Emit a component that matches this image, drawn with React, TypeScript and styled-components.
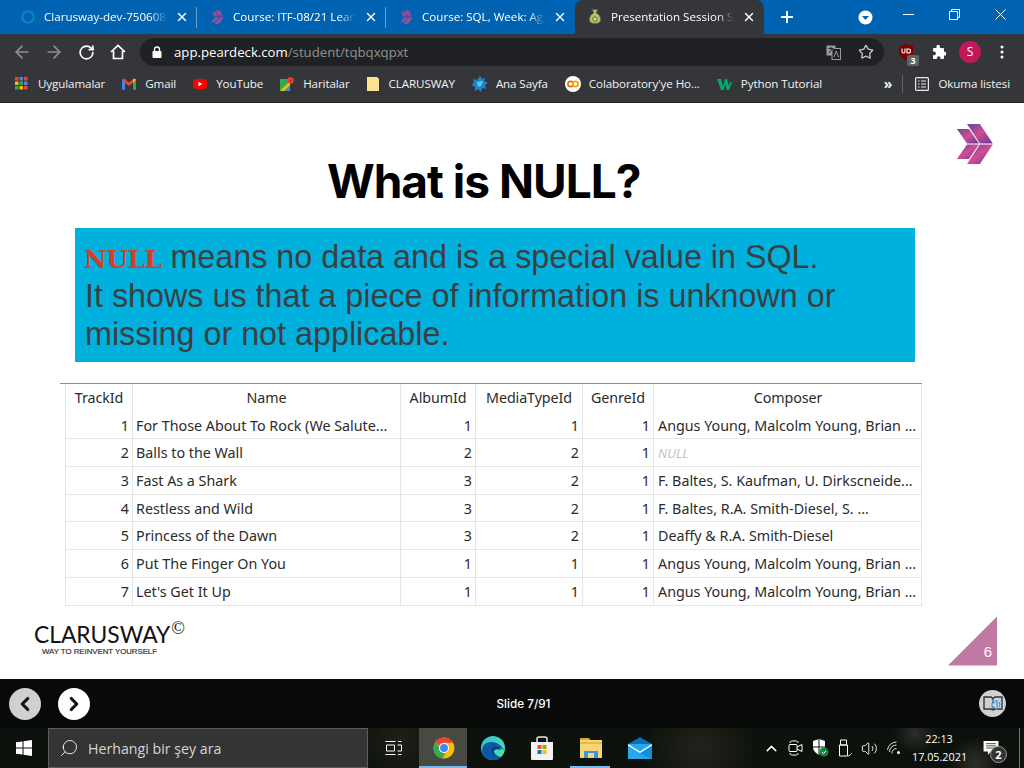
import React from 'react';
import styled, { createGlobalStyle } from 'styled-components';
import {
  ArrowLeft,
  ArrowRight,
  ChevronLeft,
  ChevronRight,
  ChevronUp,
  Plus,
  RotateCw,
  Search,
  Star,
  Volume2,
  X,
} from 'lucide-react';

const GlobalStyle = createGlobalStyle`
  html, body { margin: 0; padding: 0; background: #fff; }
  body { font-family: "Open Sans", "Liberation Sans", sans-serif; overflow: hidden; }
`;

const Page = styled.div`
  width: 1024px;
  height: 768px;
  display: flex;
  flex-direction: column;
  overflow: hidden;
`;

/* ---------- browser chrome ---------- */
const TabStrip = styled.div`
  height: 34px;
  background: #0063b1;
  display: flex;
  padding-left: 8px;
  color: #fff;
  flex: none;
`;

const Tab = styled.div<{ $active?: boolean; $last?: boolean }>`
  position: relative;
  width: 189px;
  height: 34px;
  box-sizing: border-box;
  padding: 0 8px 1px 12px;
  display: flex;
  align-items: center;
  background: ${(p) => (p.$active ? '#35363a' : 'transparent')};
  border-radius: ${(p) => (p.$active ? '8px 8px 0 0' : '0')};
  &::after {
    content: '';
    display: ${(p) => (p.$active || p.$last ? 'none' : 'block')};
    position: absolute;
    right: 0;
    top: 7px;
    bottom: 6px;
    width: 1px;
    background: #6f9dcb;
  }
`;

const TabIcon = styled.span`
  width: 16px;
  height: 16px;
  flex: none;
  display: flex;
  align-items: center;
  justify-content: center;
  margin-right: 8px;
`;

const TabTitle = styled.span`
  flex: 1;
  font-size: 11.6px;
  white-space: nowrap;
  min-width: 0;
  -webkit-mask-image: linear-gradient(90deg, #000 86%, transparent 100%);
  mask-image: linear-gradient(90deg, #000 86%, transparent 100%);
`;

const TabClose = styled.span`
  margin-left: 8px;
  display: flex;
  flex: none;
`;

const NewTab = styled.span`
  margin-left: 14px;
  display: flex;
  align-items: center;
`;

const ProfileDrop = styled.span`
  margin-left: 62px;
  display: flex;
  align-items: center;
`;

const WindowControls = styled.div`
  margin-left: auto;
  display: flex;
  height: 28px;
  align-items: center;
  padding-right: 18px;
  gap: 35px;
`;

const Toolbar = styled.div`
  height: 34px;
  background: #35363a;
  display: flex;
  align-items: flex-start;
  padding: 4px 6px 0 6px;
  box-sizing: border-box;
  color: #fff;
  flex: none;
`;

const NavButton = styled.span`
  width: 32px;
  height: 28px;
  display: flex;
  align-items: center;
  justify-content: center;
`;

const Omnibox = styled.div`
  margin-left: 6px;
  width: 744px;
  height: 28px;
  border-radius: 14px;
  background: #202124;
  display: flex;
  align-items: center;
  padding: 0 10px 0 12px;
  box-sizing: border-box;
  flex: none;
`;

const UrlText = styled.span`
  margin-left: 12px;
  font-size: 13.2px;
  color: #fff;
  b {
    font-weight: 400;
  }
  i {
    font-style: normal;
    color: #8f9194;
  }
`;

const OmniRight = styled.span`
  margin-left: auto;
  display: flex;
  align-items: center;
  gap: 17px;
`;

const ExtGroup = styled.div`
  margin-left: 6px;
  display: flex;
  align-items: center;
  height: 28px;
`;

const ExtSlot = styled.span`
  width: 32px;
  display: flex;
  align-items: center;
  justify-content: center;
`;

const UblockBadge = styled.span`
  position: absolute;
  right: -6px;
  bottom: -6px;
  width: 12px;
  height: 11px;
  border-radius: 2px;
  background: #5f6368;
  color: #fff;
  font-size: 9px;
  font-weight: 700;
  line-height: 11px;
  text-align: center;
`;

const Ublock = styled.span`
  position: relative;
  width: 14px;
  height: 16px;
  display: flex;
`;

const Avatar = styled.span`
  width: 22px;
  height: 22px;
  border-radius: 50%;
  background: #c2185b;
  color: #fff;
  font-size: 12px;
  line-height: 22px;
  text-align: center;
`;

const BookmarkBar = styled.div`
  height: 35px;
  box-sizing: border-box;
  background: #35363a;
  border-bottom: 1px solid #1f2023;
  display: flex;
  align-items: center;
  padding: 0 14px 3px 15px;
  gap: 17px;
  color: #f1f3f4;
  flex: none;
`;

const Bookmark = styled.span<{ $gap?: number }>`
  display: flex;
  align-items: center;
  gap: ${(p) => p.$gap ?? 9}px;
  font-size: 11.6px;
  letter-spacing: -0.1px;
  white-space: nowrap;
`;

const BookmarkEnd = styled.div`
  margin-left: auto;
  display: flex;
  align-items: center;
`;

const More = styled.span`
  font-size: 14px;
  font-weight: 700;
  margin-right: 10px;
`;

const BarDivider = styled.span`
  width: 1px;
  height: 18px;
  background: #5f6368;
  margin-right: 12px;
`;

/* ---------- slide ---------- */
const Slide = styled.main`
  flex: 1;
  min-height: 0;
  background: #fff;
  display: flex;
  flex-direction: column;
`;

const SlideHead = styled.header`
  height: 125px;
  display: grid;
  grid-template-columns: 327px auto 1fr;
  flex: none;
`;

const SlideTitle = styled.h1`
  margin: 47px 0 0;
  font-family: Inter, "Liberation Sans", sans-serif;
  font-size: 46px;
  line-height: 62px;
  font-weight: 700;
  letter-spacing: -1px;
  color: #000;
`;

const LogoMark = styled.span`
  justify-self: end;
  margin: 21px 31px 0 0;
  display: flex;
`;

const Callout = styled.section`
  margin-left: 75px;
  width: 840px;
  height: 134px;
  box-sizing: border-box;
  padding: 10px 10px 0;
  background: #01b1dd;
  color: #3c3f42;
  font-family: "Liberation Sans", Arial, sans-serif;
  font-size: 32.3px;
  line-height: 38.5px;
  flex: none;
  code {
    font-family: "DejaVu Serif", serif;
    font-weight: 700;
    font-size: 25px;
    line-height: 0;
    letter-spacing: -0.6px;
    margin-left: -1px;
    color: #d1402a;
  }
`;

const TableWrap = styled.section`
  margin: 21px 0 0 60px;
  width: 862px;
  border-top: 1px solid #8b8d8f;
  box-sizing: border-box;
  padding-left: 5px;
  flex: none;
`;

const Row = styled.div`
  display: grid;
  grid-template-columns: 68px 268px 75px 107px 71px 268px;
  height: 27.7px;
  border-bottom: 1px solid #e6e6e6;
  box-sizing: border-box;
  font-family: "Noto Sans", "Open Sans", sans-serif;
  font-size: 14.3px;
  color: #2b2b2b;
  &:first-child {
    border-bottom: 0;
    letter-spacing: -0.1px;
  }
`;

const Cell = styled.div<{ $num?: boolean; $head?: boolean; $first?: boolean }>`
  padding: 0 3px;
  display: flex;
  align-items: center;
  justify-content: ${(p) => (p.$head ? 'center' : p.$num ? 'flex-end' : 'flex-start')};
  border-right: 1px solid #e6e6e6;
  border-left: ${(p) => (p.$first ? '1px solid #e6e6e6' : '0')};
  white-space: nowrap;
  overflow: hidden;
  &:last-child {
    padding-left: 4px;
  }
`;

const NullText = styled.i`
  color: #c4c4c4;
  font-size: 13px;
`;

const SlideFoot = styled.footer`
  flex: 1;
  display: flex;
  justify-content: space-between;
  padding: 11px 27px 0 34px;
`;

const Brand = styled.div`
  margin-top: 5px;
  display: flex;
  flex-direction: column;
`;

const BrandName = styled.div`
  font-family: Lato, "Liberation Sans", sans-serif;
  font-size: 22.8px;
  line-height: 24px;
  color: #111;
  display: flex;
  sup {
    font-family: "Liberation Serif", serif;
    font-size: 18px;
    line-height: 16px;
    margin-left: 1px;
    margin-top: -2px;
  }
`;

const BrandTag = styled.div`
  font-family: "Liberation Sans", sans-serif;
  font-size: 7.8px;
  line-height: 10px;
  margin: 1px 0 0 8px;
  color: #333;
  -webkit-text-stroke: 0.2px #333;
`;

const PageCorner = styled.div`
  width: 49px;
  height: 49px;
  clip-path: polygon(100% 0, 100% 100%, 0 100%);
  background: #c17aa3;
  color: #fff;
  font-family: "Liberation Sans", sans-serif;
  font-size: 15px;
  line-height: 20px;
  display: flex;
  align-items: flex-end;
  justify-content: flex-end;
  padding: 0 5px 4px 0;
  box-sizing: border-box;
`;

/* ---------- player bar ---------- */
const PlayerBar = styled.div`
  height: 49px;
  background: #080a0a;
  display: grid;
  grid-template-columns: 1fr auto 1fr;
  align-items: center;
  padding: 0 18px 0 9px;
  color: #fff;
  flex: none;
`;

const PlayerNav = styled.div`
  display: flex;
  gap: 17px;
`;

const RoundBtn = styled.span<{ $dim?: boolean }>`
  width: 32px;
  height: 32px;
  border-radius: 50%;
  background: ${(p) => (p.$dim ? '#cfd0d0' : '#fff')};
  display: flex;
  align-items: center;
  justify-content: center;
  color: #111;
`;

const SlideCount = styled.span`
  font-family: Inter, sans-serif;
  font-size: 11.7px;
  font-weight: 500;
  margin-left: 32px;
`;

const AudioBtn = styled.span`
  justify-self: end;
  width: 27px;
  height: 27px;
  border-radius: 50%;
  background: #d0d2d2;
  display: flex;
  align-items: center;
  justify-content: center;
`;

/* ---------- taskbar ---------- */
const Taskbar = styled.div`
  height: 40px;
  background:
    radial-gradient(circle at 915px 5px, #2c2e2a 0, transparent 22px),
    radial-gradient(circle at 975px 35px, #2c2e2a 0, transparent 26px),
    radial-gradient(circle at 700px 20px, #20241c 0, transparent 60px),
    radial-gradient(circle at 400px 10px, #1c2018 0, transparent 50px),
    #0d110b;
  display: flex;
  align-items: center;
  color: #fff;
  flex: none;
`;

const StartBtn = styled.span`
  width: 48px;
  height: 40px;
  display: flex;
  align-items: center;
  justify-content: center;
`;

const SearchBox = styled.div`
  width: 320px;
  height: 40px;
  box-sizing: border-box;
  background: #343434;
  border: 1px solid #5c5c5c;
  display: flex;
  align-items: center;
  padding-left: 10px;
  gap: 9px;
  font-size: 14.2px;
  color: #d6d6d6;
  font-family: "Open Sans", sans-serif;
  svg {
    transform: scaleX(-1);
  }
`;

const TaskApp = styled.span<{ $active?: boolean; $open?: boolean; $wide?: boolean }>`
  position: relative;
  width: ${(p) => (p.$wide ? 51 : 49)}px;
  height: 40px;
  display: flex;
  align-items: center;
  justify-content: center;
  background: ${(p) => (p.$active ? 'linear-gradient(90deg, #474a43 48px, transparent 48px)' : 'transparent')};
  &::after {
    content: '';
    display: ${(p) => (p.$active || p.$open ? 'block' : 'none')};
    position: absolute;
    bottom: 0;
    height: 2px;
    left: ${(p) => (p.$active ? 0 : 4)}px;
    right: ${(p) => (p.$active ? 1 : 5)}px;
    background: #76b9ed;
  }
`;

const Tray = styled.div`
  margin-left: auto;
  display: flex;
  align-items: center;
  height: 40px;
`;

const TrayIcon = styled.span`
  width: 24.5px;
  display: flex;
  justify-content: center;
  position: relative;
`;

const Clock = styled.div`
  width: 54px;
  margin-left: 6px;
  text-align: center;
  font-size: 10.8px;
  line-height: 18px;
  white-space: nowrap;
`;

const Notify = styled.span`
  position: relative;
  margin: 0 20px 0 17px;
  display: flex;
`;

const NotifyCount = styled.span`
  position: absolute;
  right: -8px;
  bottom: -8px;
  width: 15px;
  height: 15px;
  border-radius: 50%;
  border: 1px solid #999;
  background: #333;
  font-size: 11px;
  font-weight: 700;
  line-height: 15px;
  text-align: center;
`;

const DesktopEdge = styled.span`
  width: 1px;
  height: 40px;
  background: #777;
  margin-right: 4px;
`;

/* ---------- drawn icons ---------- */
const Chevrons: React.FC<{ size?: number; muted?: boolean }> = ({ size = 14, muted }) => (
  <svg width={size * 0.92} height={size} viewBox="0 0 40 40" preserveAspectRatio="none" opacity={muted ? 0.75 : 1}>
    <defs>
      <linearGradient id="chev" x1="0" y1="0" x2="1" y2="1">
        <stop offset="0" stopColor="#5a4a9c" />
        <stop offset="0.5" stopColor="#d34b93" />
        <stop offset="1" stopColor="#5a3f94" />
      </linearGradient>
    </defs>
    <path d="M1 5h13l11 14.500H12z" fill="url(#chev)" />
    <path d="M12 20.500h13L14 35H1z" fill="url(#chev)" />
    <path d="M12 0h14l14 19.500H26z" fill="url(#chev)" />
    <path d="M26 20.500h14L26 40H12z" fill="url(#chev)" />
  </svg>
);

const Close: React.FC = () => <X size={14} strokeWidth={2.4} color="#fff" />;

const ChromeLogo: React.FC<{ size?: number }> = ({ size = 22 }) => (
  <svg width={size} height={size} viewBox="0 0 24 24">
    <circle cx="12" cy="12" r="11.500" fill="#fbbc04" />
    <path d="M12 .5a11.500 11.500 0 0 1 10 5.750H12a5.750 5.750 0 0 0-5.300 3.500L2.800 5.100A11.500 11.500 0 0 1 12 .5z" fill="#ea4335" />
    <path d="M2.800 5.100 7 12a5.750 5.750 0 0 0 6.400 5.600l-3.200 5.800A11.500 11.500 0 0 1 2.800 5.100z" fill="#34a853" />
    <circle cx="12" cy="12" r="5.500" fill="#fff" />
    <circle cx="12" cy="12" r="4.300" fill="#4285f4" />
  </svg>
);

const PearIcon: React.FC = () => (
  <svg width="14" height="17" viewBox="0 0 16 18">
    <path d="M5 1h6l-1.500 4c3 1.500 5 4 5 7.500 0 3.500-3 4.500-6.500 4.500s-6.500-1-6.500-4.500c0-3.500 2-6 5-7.500z" fill="#b9bd7a" stroke="#5b6140" />
    <circle cx="8" cy="12" r="2.500" fill="#e6df62" stroke="#4b5a2a" />
  </svg>
);

const AppsGrid: React.FC = () => {
  const colors = ['#ea4335', '#4285f4', '#ea4335', '#fbbc04', '#34a853', '#4285f4', '#34a853', '#fbbc04', '#ea4335'];
  return (
    <svg width="13" height="13" viewBox="0 0 13 13">
      {colors.map((c, i) => (
        <rect key={i} x={(i % 3) * 4.5} y={Math.floor(i / 3) * 4.5} width="3.500" height="3.500" fill={c} />
      ))}
    </svg>
  );
};

const GmailIcon: React.FC = () => (
  <svg width="14" height="14" viewBox="0 0 14 14">
    <path d="M0 2.500v10h3V6l4 3 4-3v6.500h3v-10L12 1.500 7 5.500 2 1.500z" fill="#ea4335" />
    <path d="M0 2.500v10h3V6z" fill="#4285f4" />
    <path d="M14 2.500v10h-3V6z" fill="#34a853" />
    <path d="M14 2.500l-3 3.500V2.500l1-1z" fill="#fbbc04" />
  </svg>
);

const YoutubeIcon: React.FC = () => (
  <svg width="14" height="14" viewBox="0 0 14 14">
    <rect y="2" width="14" height="10" rx="3" fill="#f00" />
    <path d="M5.500 4.800v4.400L9.200 7z" fill="#fff" />
  </svg>
);

const MapsIcon: React.FC = () => (
  <svg width="14" height="14" viewBox="0 0 14 14">
    <path d="M0 2h10v12H0z" fill="#34a853" />
    <path d="M0 14 10 4v4l-6 6z" fill="#fbbc04" />
    <path d="M5 14 10 9v5z" fill="#4285f4" />
    <circle cx="10.500" cy="3.500" r="3.200" fill="#ea4335" />
    <circle cx="10.500" cy="3.500" r="1.100" fill="#a52714" />
  </svg>
);

const FolderMark: React.FC = () => (
  <svg width="12" height="14" viewBox="0 0 12 14">
    <path d="M0 0h10l2 2v12H0z" fill="#fde293" />
  </svg>
);

const SplashIcon: React.FC = () => (
  <svg width="16" height="16" viewBox="0 0 16 16">
    <path d="M8 0l2 3 3-1-1 3 4 2-3 2 1 4-4-1-1 4-3-3-3 2v-4L0 9l2-3-1-3 4 1z" fill="#1d86c8" />
    <path d="M5 6l6-1-2 5-3 1z" fill="#5cc6ee" />
  </svg>
);

const ColabIcon: React.FC = () => (
  <svg width="16" height="16" viewBox="0 0 16 16">
    <circle cx="8" cy="8" r="8" fill="#fff" />
    <circle cx="5.500" cy="8" r="2.600" fill="none" stroke="#e8710a" strokeWidth="1.800" />
    <circle cx="10.500" cy="8" r="2.600" fill="none" stroke="#f9ab00" strokeWidth="1.800" />
  </svg>
);

const W3Icon: React.FC = () => (
  <svg width="16" height="14" viewBox="0 0 16 14">
    <path d="M0 2h4l2 7 2-7h2l2 7 1-4h2l-3 8h-2.500L8.500 7 6.500 13H4z" fill="#04aa6d" />
  </svg>
);

const ReadingList: React.FC = () => (
  <svg width="14" height="14" viewBox="0 0 14 14" fill="none" stroke="#e8eaed" strokeWidth="1.200">
    <rect x=".6" y=".6" width="12.800" height="12.800" rx="1" />
    <path d="M3 4h1.500M6 4h5M3 7h1.500M6 7h5M3 10h1.500M6 10h5" />
  </svg>
);

const HomeIcon: React.FC = () => (
  <svg width="16" height="16" viewBox="0 0 16 16" fill="none" stroke="#fff" strokeWidth="1.700">
    <path d="M1 8l7-6.500L15 8M3.500 7v7.500h9V7" />
  </svg>
);

const LockIcon: React.FC = () => (
  <svg width="10" height="12" viewBox="0 0 10 12">
    <path d="M2.500 5V3.500a2.500 2.500 0 0 1 5 0V5" fill="none" stroke="#fff" strokeWidth="1.300" />
    <rect x=".5" y="5" width="9" height="7" rx="1" fill="#fff" />
  </svg>
);

const TranslateIcon: React.FC = () => (
  <svg width="15" height="15" viewBox="0 0 15 15">
    <rect x=".5" y=".5" width="9" height="10" fill="#9a9b9c" />
    <rect x="6" y="3.500" width="8.500" height="11" fill="#202124" stroke="#9a9b9c" />
    <path d="M2.500 3.500h5M5 2v1.500M3 8l3-4" stroke="#202124" />
    <path d="M8 12l2.300-6 2.300 6" stroke="#9a9b9c" fill="none" />
  </svg>
);

const UblockShield: React.FC = () => (
  <svg width="14" height="16" viewBox="0 0 14 16">
    <path d="M7 0l7 2v6c0 4-3 6.500-7 8-4-1.500-7-4-7-8V2z" fill="#800000" />
    <path d="M3 4.500v3a1.500 1.500 0 0 0 3 0v-3M8 4.500v5M8 5h1.500a2 2 0 0 1 0 4H8" fill="none" stroke="#fff" strokeWidth="1.100" />
  </svg>
);

const PuzzleIcon: React.FC = () => (
  <svg width="15" height="15" viewBox="0 0 15 15">
    <path d="M5.500 1.500a1.700 1.700 0 0 1 3.400 0V3H12a1 1 0 0 1 1 1v2.800h.5a1.900 1.900 0 0 1 0 3.800H13V13a1 1 0 0 1-1 1H9.500v-1a1.800 1.800 0 0 0-3.600 0v1H3a1 1 0 0 1-1-1v-2.800h1a1.900 1.900 0 0 0 0-3.800H2V4a1 1 0 0 1 1-1h2.500z" fill="#fff" />
  </svg>
);

const KebabIcon: React.FC = () => (
  <svg width="4" height="14" viewBox="0 0 4 14" fill="#fff">
    <circle cx="2" cy="2" r="1.500" />
    <circle cx="2" cy="7" r="1.500" />
    <circle cx="2" cy="12" r="1.500" />
  </svg>
);

const DropCircle: React.FC = () => (
  <svg width="15" height="15" viewBox="0 0 15 15">
    <circle cx="7.500" cy="7.500" r="7" fill="#fff" />
    <path d="M4 6h7l-3.500 4z" fill="#0063b1" />
  </svg>
);

const MinIcon: React.FC = () => (
  <svg width="11" height="11" viewBox="0 0 11 11">
    <path d="M0 5.500h11" stroke="#fff" />
  </svg>
);

const RestoreIcon: React.FC = () => (
  <svg width="11" height="11" viewBox="0 0 11 11" fill="none" stroke="#fff">
    <path d="M.5 2.500h8v8h-8zM2.500 2.500v-2h8v8h-2" />
  </svg>
);

const WinClose: React.FC = () => (
  <svg width="11" height="11" viewBox="0 0 11 11" stroke="#fff">
    <path d="M.5.500l10 10M10.500.500l-10 10" />
  </svg>
);

const BookAudio: React.FC = () => (
  <svg width="20" height="18" viewBox="0 0 20 18">
    <path d="M1 2h7l2 1.500L12 2h7v12h-7l-2 1-2-1H1z" fill="none" stroke="#333" strokeWidth="1.400" />
    <path d="M10 3.500V15" stroke="#333" />
    <path d="M9 8h2l3-3v10l-3-3H9z" fill="#d0d2d2" stroke="#2b88d8" />
    <path d="M16 7c1 1 1 4 0 5M18 5.500c1.600 2 1.600 6 0 8" fill="none" stroke="#2b88d8" />
  </svg>
);

const WindowsLogo: React.FC = () => (
  <svg width="16" height="16" viewBox="0 0 16 16" fill="#fff">
    <path d="M0 2.300 6.500 1.400v6.100H0zM7.500 1.300 16 0v7.500H7.500zM0 8.500h6.500v6.100L0 13.700zM7.500 8.500H16V16l-8.500-1.300z" />
  </svg>
);

const TaskView: React.FC = () => (
  <svg width="17" height="16" viewBox="0 0 17 16" fill="none" stroke="#fff">
    <path d="M.5 1.500h10M.5 14.500h10M1.500 5h8v6h-8zM12.500 5h4v6h-4M13 1.500h3.500M13 14.500h3.500" />
  </svg>
);

const EdgeLogo: React.FC = () => (
  <svg width="24" height="24" viewBox="0 0 24 24">
    <defs>
      <linearGradient id="edge" x1="0" y1="0" x2="1" y2="1">
        <stop offset="0" stopColor="#2dc3d8" />
        <stop offset="1" stopColor="#50e6a0" />
      </linearGradient>
    </defs>
    <circle cx="12" cy="12" r="12" fill="url(#edge)" />
    <path d="M1 15C1 8 6 6 10 6c6 0 10 3 13 8-3-2-9-3-10 0-1 2 2 6 7 7-3 3-6 3-9 3-6 0-10-4-10-9z" fill="#0c59a4" />
    <path d="M12 11c3-1 7 0 8 3-3-1-6-1-7 1-1 1-1 3 1 5-3-1-5-6-2-9z" fill="#0a3f7d" />
  </svg>
);

const StoreLogo: React.FC = () => (
  <svg width="24" height="24" viewBox="0 0 24 24">
    <path d="M7 6V3a2 2 0 0 1 2-2h6a2 2 0 0 1 2 2v3" fill="none" stroke="#e8e8e8" strokeWidth="1.500" />
    <path d="M1 6h22v17a1 1 0 0 1-1 1H2a1 1 0 0 1-1-1z" fill="#f2f2f2" />
    <rect x="7.500" y="9" width="4" height="4" fill="#f25022" />
    <rect x="12.500" y="9" width="4" height="4" fill="#7fba00" />
    <rect x="7.500" y="14" width="4" height="4" fill="#0078d4" />
    <rect x="12.500" y="14" width="4" height="4" fill="#ffb900" />
  </svg>
);

const ExplorerLogo: React.FC = () => (
  <svg width="24" height="22" viewBox="0 0 24 22">
    <path d="M1 1h9l2 3h-11z" fill="#d9a520" />
    <rect x="1" y="3" width="22" height="18" fill="#f7d774" />
    <path d="M1 5h22v2H1z" fill="#e8b93c" />
    <path d="M5 21v-7h14v7h-4v-3H9v3z" fill="#3d97d8" />
    <rect x="9" y="16" width="6" height="2" fill="#f7d774" />
  </svg>
);

const MailLogo: React.FC = () => (
  <svg width="24" height="22" viewBox="0 0 24 22">
    <path d="M12 0l12 7v15H0V7z" fill="#0f6cbd" />
    <path d="M0 7h24v15H0z" fill="#28a8ea" />
    <path d="M0 7l12 7.500L24 7v1.500L12 16 0 8.500z" fill="#fff" />
    <path d="M24 22V9l-12 7.500z" fill="#0f8fd9" />
  </svg>
);

const MeetNow: React.FC = () => (
  <svg width="15" height="18" viewBox="0 0 15 18" fill="none" stroke="#fff">
    <path d="M2 4V3c0-1.500 8-1.500 8 0v1M2 14v1c0 1.500 8 1.500 8 0v-1" />
    <rect x="1" y="5.500" width="8" height="7" rx="1" />
    <path d="M9 8l5-2.500v7L9 10" />
  </svg>
);

const DefenderShield: React.FC = () => (
  <svg width="17" height="18" viewBox="0 0 17 18">
    <path d="M7 0l6 2v6c0 4-3 6-6 8-3-2-6-4-6-8V2z" fill="#fff" />
    <path d="M7 0v16M1 8h12" stroke="#10140f" />
    <circle cx="12" cy="13" r="4.500" fill="#10893e" />
    <path d="M10 13l1.500 1.500 2.500-2.500" stroke="#fff" fill="none" />
  </svg>
);

const UsbIcon: React.FC = () => (
  <svg width="14" height="18" viewBox="0 0 14 18" fill="none" stroke="#fff">
    <path d="M2.500 1h6v5h-6zM1.500 6h8v11h-8z" />
    <path d="M9.500 16l1.500 1 3-3" stroke="#bbb" />
  </svg>
);

const WifiIcon: React.FC = () => (
  <svg width="14" height="14" viewBox="0 0 14 14" fill="none" stroke="#ddd">
    <path d="M.5 9a9 9 0 0 1 9-8M2.500 11a7 7 0 0 1 7-7M5 12.500a4.500 4.500 0 0 1 4.500-5" />
    <circle cx="11.500" cy="11.500" r="1.500" fill="#fff" stroke="none" />
  </svg>
);

const ChatIcon: React.FC = () => (
  <svg width="16" height="14" viewBox="0 0 17 16">
    <path d="M0 0h17v12H8l-3 4v-4H0z" fill="#fff" />
    <path d="M3 3h11M3 5.500h11M3 8h11" stroke="#333" />
  </svg>
);

/* ---------- data ---------- */
const tabs: { title: string; icon: React.ReactNode }[] = [
  {
    title: 'Clarusway-dev-750608',
    icon: (
      <svg width="16" height="16" viewBox="0 0 16 16" fill="none">
        <circle cx="8" cy="8" r="5.700" stroke="#1382c4" strokeWidth="2" />
      </svg>
    ),
  },
  { title: 'Course: ITF-08/21 Learn', icon: <Chevrons muted /> },
  { title: 'Course: SQL, Week: Agg', icon: <Chevrons muted /> },
];

const bookmarks: { label: string; icon: React.ReactNode; gap?: number }[] = [
  { label: 'Uygulamalar', icon: <AppsGrid />, gap: 10 },
  { label: 'Gmail', icon: <GmailIcon /> },
  { label: 'YouTube', icon: <YoutubeIcon /> },
  { label: 'Haritalar', icon: <MapsIcon /> },
  { label: 'CLARUSWAY', icon: <FolderMark />, gap: 10 },
  { label: 'Ana Sayfa', icon: <SplashIcon />, gap: 8 },
  { label: "Colaboratory'ye Ho...", icon: <ColabIcon />, gap: 8 },
  { label: 'Python Tutorial', icon: <W3Icon />, gap: 8 },
];

const heads = ['TrackId', 'Name', 'AlbumId', 'MediaTypeId', 'GenreId', 'Composer'];

const tracks: [number, string, number, number, number, string | null][] = [
  [1, 'For Those About To Rock (We Salute...', 1, 1, 1, 'Angus Young, Malcolm Young, Brian ...'],
  [2, 'Balls to the Wall', 2, 2, 1, null],
  [3, 'Fast As a Shark', 3, 2, 1, 'F. Baltes, S. Kaufman, U. Dirkscneide...'],
  [4, 'Restless and Wild', 3, 2, 1, 'F. Baltes, R.A. Smith-Diesel, S. ...'],
  [5, 'Princess of the Dawn', 3, 2, 1, 'Deaffy & R.A. Smith-Diesel'],
  [6, 'Put The Finger On You', 1, 1, 1, 'Angus Young, Malcolm Young, Brian ...'],
  [7, "Let's Get It Up", 1, 1, 1, 'Angus Young, Malcolm Young, Brian ...'],
];

const App: React.FC = () => (
  <Page>
    <GlobalStyle />
    <TabStrip>
      {tabs.map((t, i) => (
        <Tab key={t.title} $last={i === tabs.length - 1}>
          <TabIcon>{t.icon}</TabIcon>
          <TabTitle>{t.title}</TabTitle>
          <TabClose>
            <Close />
          </TabClose>
        </Tab>
      ))}
      <Tab $active>
        <TabIcon>
          <PearIcon />
        </TabIcon>
        <TabTitle>Presentation Session Stu</TabTitle>
        <TabClose>
          <Close />
        </TabClose>
      </Tab>
      <NewTab>
        <Plus size={18} strokeWidth={2.6} color="#fff" />
      </NewTab>
      <ProfileDrop>
        <DropCircle />
      </ProfileDrop>
      <WindowControls>
        <MinIcon />
        <RestoreIcon />
        <WinClose />
      </WindowControls>
    </TabStrip>

    <Toolbar>
      <NavButton>
        <ArrowLeft size={20} color="#8e9094" />
      </NavButton>
      <NavButton>
        <ArrowRight size={20} color="#8e9094" />
      </NavButton>
      <NavButton>
        <RotateCw size={17} strokeWidth={2.4} color="#fff" />
      </NavButton>
      <NavButton>
        <HomeIcon />
      </NavButton>
      <Omnibox>
        <LockIcon />
        <UrlText>
          <b>app.peardeck.com</b>
          <i>/student/tqbqxqpxt</i>
        </UrlText>
        <OmniRight>
          <TranslateIcon />
          <Star size={16} color="#c4c6c9" />
        </OmniRight>
      </Omnibox>
      <ExtGroup>
        <ExtSlot>
          <Ublock>
            <UblockShield />
            <UblockBadge>3</UblockBadge>
          </Ublock>
        </ExtSlot>
        <ExtSlot>
          <PuzzleIcon />
        </ExtSlot>
        <ExtSlot>
          <Avatar>S</Avatar>
        </ExtSlot>
        <ExtSlot>
          <KebabIcon />
        </ExtSlot>
      </ExtGroup>
    </Toolbar>

    <BookmarkBar>
      {bookmarks.map((b) => (
        <Bookmark key={b.label} $gap={b.gap}>
          {b.icon}
          {b.label}
        </Bookmark>
      ))}
      <BookmarkEnd>
        <More>»</More>
        <BarDivider />
        <Bookmark>
          <ReadingList />
          Okuma listesi
        </Bookmark>
      </BookmarkEnd>
    </BookmarkBar>

    <Slide>
      <SlideHead>
        <span />
        <SlideTitle>What is NULL?</SlideTitle>
        <LogoMark>
          <Chevrons size={40} />
        </LogoMark>
      </SlideHead>
      <Callout>
        <code>NULL</code> means no data and is a special value in SQL.
        <br />
        It shows us that a piece of information is unknown or
        <br />
        missing or not applicable.
      </Callout>
      <TableWrap>
        <Row>
          {heads.map((h, i) => (
            <Cell key={h} $head $first={i === 0}>
              {h}
            </Cell>
          ))}
        </Row>
        {tracks.map((r) => (
          <Row key={r[0]}>
            <Cell $num $first>
              {r[0]}
            </Cell>
            <Cell>{r[1]}</Cell>
            <Cell $num>{r[2]}</Cell>
            <Cell $num>{r[3]}</Cell>
            <Cell $num>{r[4]}</Cell>
            <Cell>{r[5] ?? <NullText>NULL</NullText>}</Cell>
          </Row>
        ))}
      </TableWrap>
      <SlideFoot>
        <Brand>
          <BrandName>
            CLARUSWAY<sup>©</sup>
          </BrandName>
          <BrandTag>WAY TO REINVENT YOURSELF</BrandTag>
        </Brand>
        <PageCorner>6</PageCorner>
      </SlideFoot>
    </Slide>

    <PlayerBar>
      <PlayerNav>
        <RoundBtn $dim>
          <ChevronLeft size={22} strokeWidth={3.4} />
        </RoundBtn>
        <RoundBtn>
          <ChevronRight size={22} strokeWidth={3.4} />
        </RoundBtn>
      </PlayerNav>
      <SlideCount>Slide 7/91</SlideCount>
      <AudioBtn>
        <BookAudio />
      </AudioBtn>
    </PlayerBar>

    <Taskbar>
      <StartBtn>
        <WindowsLogo />
      </StartBtn>
      <SearchBox>
        <Search size={20} strokeWidth={1.2} color="#e6e6e6" />
        <span>Herhangi bir şey ara</span>
      </SearchBox>
      <TaskApp $wide>
        <TaskView />
      </TaskApp>
      <TaskApp $active>
        <ChromeLogo />
      </TaskApp>
      <TaskApp>
        <EdgeLogo />
      </TaskApp>
      <TaskApp>
        <StoreLogo />
      </TaskApp>
      <TaskApp $open>
        <ExplorerLogo />
      </TaskApp>
      <TaskApp>
        <MailLogo />
      </TaskApp>
      <Tray>
        <TrayIcon>
          <ChevronUp size={17} color="#fff" />
        </TrayIcon>
        <TrayIcon>
          <MeetNow />
        </TrayIcon>
        <TrayIcon>
          <DefenderShield />
        </TrayIcon>
        <TrayIcon>
          <UsbIcon />
        </TrayIcon>
        <TrayIcon>
          <Volume2 size={17} strokeWidth={1.3} color="#fff" />
        </TrayIcon>
        <TrayIcon>
          <WifiIcon />
        </TrayIcon>
        <Clock>
          22:13
          <br />
          17.05.2021
        </Clock>
        <Notify>
          <ChatIcon />
          <NotifyCount>2</NotifyCount>
        </Notify>
        <DesktopEdge />
      </Tray>
    </Taskbar>
  </Page>
);

export default App;
